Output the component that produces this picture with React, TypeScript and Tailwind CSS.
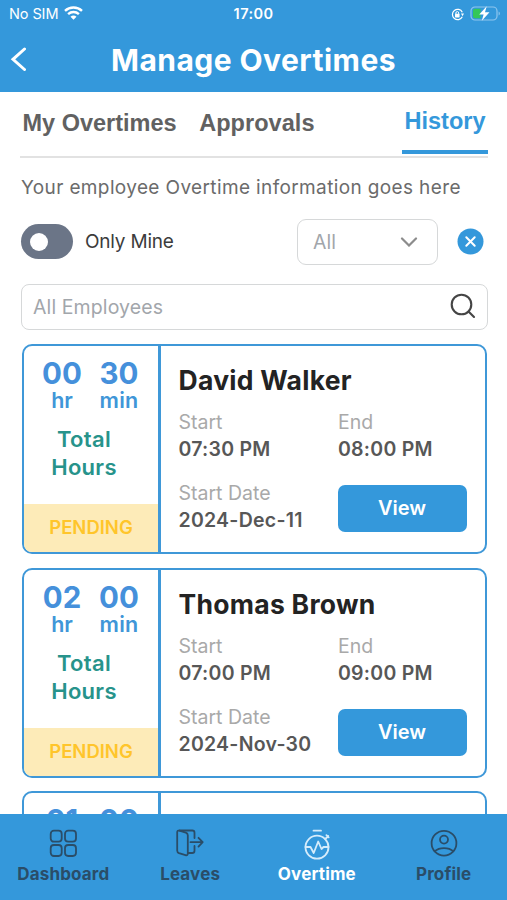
import React, { useState } from 'react';
import clsx from 'clsx';

type Tab = 'my' | 'approvals' | 'history';

interface OvertimeEntry {
  hours: string;
  minutes: string;
  name: string;
  start: string;
  end: string;
  startDate: string;
}

const entries: OvertimeEntry[] = [
  { hours: '00', minutes: '30', name: 'David Walker', start: '07:30 PM', end: '08:00 PM', startDate: '2024-Dec-11' },
  { hours: '02', minutes: '00', name: 'Thomas Brown', start: '07:00 PM', end: '09:00 PM', startDate: '2024-Nov-30' },
  { hours: '01', minutes: '00', name: '', start: '', end: '', startDate: '' },
];

const StatusBar: React.FC = () => (
  <div className="relative flex h-7 items-center justify-between pl-[9px] pr-[6px] text-white">
    <div className="flex items-center gap-[6px]">
      <span className="text-[14.5px] leading-7 tracking-[-0.1px]">No SIM</span>
      <svg className="-mt-[2px] h-[14px] w-[19px]" viewBox="0 0 19 14" fill="none" stroke="currentColor" strokeWidth="2.4">
        <path d="M1 4.9C5.8 .4 13.2 .4 18 4.9" />
        <path d="M4.1 8.2C7.2 5.3 11.8 5.3 14.9 8.2" />
        <path d="M9.5 13.8 6.5 10.8C8.2 9.2 10.8 9.2 12.5 10.8Z" fill="currentColor" stroke="none" />
      </svg>
    </div>
    <span className="absolute left-1/2 -translate-x-1/2 text-[14.5px] font-semibold leading-7 tracking-[0.4px]">17:00</span>
    <div className="-mt-[2px] flex items-center gap-[6px]">
      <svg className="mt-[2px] h-[13px] w-[13px]" viewBox="0 0 13 13" fill="none" stroke="currentColor" strokeWidth="1.2">
        <path d="M11.3 8.8A5.2 5.2 0 1 1 11.3 4.2" />
        <path d="M10 5.5h3l-1.5 2.7Z" fill="currentColor" stroke="none" />
        <rect x="4" y="5.8" width="4.6" height="3.6" rx=".6" fill="currentColor" stroke="none" />
        <path d="M4.9 6V5a1.4 1.4 0 0 1 2.8 0v1" strokeWidth="1" />
      </svg>
      <svg className="h-[17px] w-[31px]" viewBox="0 0 31 17">
        <rect x="1" y="2" width="26" height="13" rx="4" fill="none" stroke="#8fc6ee" strokeWidth="1.2" />
        <path d="M28.6 6.4c1.7.7 1.7 3.5 0 4.2Z" fill="#8fc6ee" />
        <path d="M5 3.8h5.5v9.4H5a2 2 0 0 1-2-2V5.8a2 2 0 0 1 2-2Z" fill="#34c759" />
        <path d="M16.7 1.2 9.2 9.5h4.4l-1.8 6.3 7.7-8.5H15Z" fill="#fff" />
      </svg>
    </div>
  </div>
);

const tabs: { id: Tab; label: string }[] = [
  { id: 'my', label: 'My Overtimes' },
  { id: 'approvals', label: 'Approvals' },
  { id: 'history', label: 'History' },
];

const Field: React.FC<{ label: string; value: string }> = ({ label, value }) => (
  <div className="whitespace-nowrap">
    <div className="text-[19.5px] leading-[27px] text-[#a9a9a9]">{label}</div>
    <div className="text-[19.5px] font-semibold leading-[27px] tracking-[0.25px] text-[#575757]">{value}</div>
  </div>
);

const OvertimeCard: React.FC<{ entry: OvertimeEntry }> = ({ entry }) => (
  <div className="flex h-[210px] shrink-0 overflow-hidden rounded-[10px] border-[2.5px] border-[#3f98d8] bg-white">
    <div className="flex w-[137px] shrink-0 flex-col border-r-[3px] border-[#3f98d8] text-center font-semibold">
      <div className="flex gap-[17px] pl-[18px] pt-[11px] text-[#4590db]">
        <div className="w-10">
          <div className="text-[29.5px] font-bold leading-8">{entry.hours}</div>
          <div className="text-[21.5px] leading-[23px] text-[#4096d8]">hr</div>
        </div>
        <div className="w-10">
          <div className="text-[29.5px] font-bold leading-8">{entry.minutes}</div>
          <div className="text-[21.5px] leading-[23px] tracking-[0.3px] text-[#4096d8]">min</div>
        </div>
      </div>
      <div className="mt-[13px] w-[120px] text-[22px] leading-7 tracking-[0.3px] text-[#27938b]">
        Total
        <br />
        Hours
      </div>
      <div className="mt-auto h-12 bg-[#fdebb8] text-[18.5px] leading-[47px] text-[#ffc52b]">PENDING</div>
    </div>
    <div className="grow pl-[17.5px] pr-[18px] pt-4">
      <div className="h-[36px] whitespace-nowrap text-[26.5px] font-bold leading-[36px] tracking-[0.28px] text-[#232323]">{entry.name}</div>
      {entry.name && (
        <div className="mt-[11px] grid grid-cols-[159.5px_1fr] gap-y-[17px]">
          <Field label="Start" value={entry.start} />
          <Field label="End" value={entry.end} />
          <Field label="Start Date" value={entry.startDate} />
          <button className="mt-[5px] h-[47px] w-[129px] rounded-[7px] bg-[#3498db] pr-px text-[20px] font-semibold leading-[47px] text-white">
            View
          </button>
        </div>
      )}
    </div>
  </div>
);

const navItems = [
  {
    label: 'Dashboard',
    icon: (
      <>
        <rect x="1.7" y="1.7" width="11" height="11" rx="3.2" />
        <rect x="16" y="1.7" width="11" height="11" rx="3.2" />
        <rect x="1.7" y="16" width="11" height="11" rx="3.2" />
        <rect x="16" y="16" width="11" height="11" rx="3.2" />
      </>
    ),
  },
  {
    label: 'Leaves',
    icon: (
      <>
        <path d="M3.5 1.5h12.8c1.7 0 2.2.8 2.2 2.3V9M18.5 17v4.7c0 1.5-.6 2.3-2.3 2.3H12" />
        <path d="M1.2 3.3c0-1.500.8-2 2.200-1.600L9.800 3.600c1.500.5 2 1.200 2 2.700v18c0 1.700-.8 2.300-2.300 1.800L3 24.200c-1.300-.5-1.800-1.200-1.800-2.700Z" />
        <path d="M14.5 13.2h12M22.5 8.800l4.200 4.400-4.200 4.400" />
      </>
    ),
  },
  {
    label: 'Overtime',
    icon: (
      <>
        <circle cx="14" cy="18.2" r="11.5" />
        <path d="M10.5 1.7H18M22.3 10l2.900-3M23.400 6.200l2.300 2.200" />
        <path d="M2.5 18h5l3.200 6 4.500-11.500L18.500 20l2-2h5" />
      </>
    ),
  },
  {
    label: 'Profile',
    icon: (
      <>
        <circle cx="14" cy="14.2" r="12.4" />
        <circle cx="14" cy="10.6" r="4" />
        <path d="M4.8 22.2c4.500-4.200 14-4.200 18.400 0" />
      </>
    ),
  },
];

const App: React.FC = () => {
  const [activeTab, setActiveTab] = useState<Tab>('history');

  return (
    <div className="flex h-[900px] w-[507px] flex-col overflow-hidden bg-white font-['Inter',sans-serif]">
      <header className="h-[92px] shrink-0 bg-[#3498db]">
        <StatusBar />
        <div className="relative flex h-16 items-center pl-[9px] text-white">
          <svg className="-mt-[2px] h-6 w-[17px]" viewBox="0 0 17 24" fill="none" stroke="currentColor" strokeWidth="3" strokeLinecap="round">
            <path d="M15.5 2 4 12.3l11.500 10.200" />
          </svg>
          <h1 className="absolute left-[111px] whitespace-nowrap text-[30px] font-bold leading-10 tracking-[0.45px]">Manage Overtimes</h1>
        </div>
      </header>

      <main className="flex min-h-0 flex-1 flex-col overflow-hidden pl-[21px] pr-[20px]">
        <div className="-ml-px -mr-px flex h-[66px] shrink-0 items-start border-b-2 border-[#e2e2e2] font-['Liberation_Sans',sans-serif] text-[23.5px] font-bold leading-7">
          {tabs.map((tab) => (
            <button
              key={tab.id}
              onClick={() => setActiveTab(tab.id)}
              className={clsx(
                'whitespace-nowrap',
                tab.id === 'my' && 'ml-[2.5px]',
                tab.id === 'approvals' && 'ml-[22.5px] tracking-[0.05px]',
                tab.id === 'history' && 'ml-auto w-[86px]',
                activeTab === tab.id ? 'h-[62px] border-b-[4px] border-[#3498db] text-[#3498db]' : 'mt-[17px] text-[#616161]'
              )}
            >
              {tab.label}
            </button>
          ))}
        </div>

        <p className="mt-[15px] shrink-0 whitespace-nowrap text-[19px] leading-[30px] tracking-[0.37px] text-[#6b6b6b]">
          Your employee Overtime information goes here
        </p>

        <div className="mt-[15px] flex h-[47px] shrink-0 items-center">
          <div className="flex h-[35px] w-[52px] items-center rounded-full bg-[#6b7587] pl-[9px]">
            <div className="h-[18px] w-[18px] rounded-full bg-white" />
          </div>
          <span className="ml-3 mt-[2px] text-[19px] tracking-[-0.2px] text-[#3c3c3c]">Only Mine</span>
          <div className="ml-auto flex h-[46px] w-[141px] items-center justify-between rounded-[9px] border-[1.5px] border-[#d6d8d9] pl-[15px] pr-[19px]">
            <span className="mt-[2px] text-[19.5px] text-[#a2a6ab]">All</span>
            <svg className="h-[10px] w-[18px]" viewBox="0 0 18 10" fill="none" stroke="#8c8c8c" strokeWidth="2.2" strokeLinecap="round">
              <path d="M2 1.5 9 8.5l7-7" />
            </svg>
          </div>
          <svg className="ml-[19px] mr-[3px] h-[27px] w-[27px]" viewBox="0 0 27 27">
            <circle cx="13.5" cy="13.5" r="13" fill="#3498db" />
            <path d="m9.3 9.3 8.400 8.400m0-8.400-8.400 8.400" stroke="#fff" strokeWidth="2" strokeLinecap="round" />
          </svg>
        </div>

        <div className="mt-[19px] flex h-[46px] w-[467px] shrink-0 items-center justify-between rounded-[8px] border-[1.5px] border-[#d6d8d9] px-[11px]">
          <span className="mt-[2px] text-[19.5px] tracking-[0.1px] text-[#a2a6ab]">All Employees</span>
          <svg className="-mt-[2px] h-[26px] w-[26px]" viewBox="0 0 26 26" fill="none" stroke="#454545" strokeWidth="2.1" strokeLinecap="round">
            <circle cx="11.5" cy="11.5" r="9.8" />
            <path d="m18.5 18.5 5.5 5.5" />
          </svg>
        </div>

        <div className="mt-[14px] flex flex-col gap-[13.5px] pl-[1px]">
          {entries.map((entry, i) => (
            <OvertimeCard key={i} entry={entry} />
          ))}
        </div>
      </main>

      <nav className="grid h-[86px] shrink-0 grid-cols-4 bg-[#3498db] pt-[15px]">
        {navItems.map((item) => (
          <div
            key={item.label}
            className={clsx('flex flex-col items-center', item.label === 'Overtime' ? 'text-white' : 'text-[#2a4d68]')}
          >
            <svg
              className={clsx('h-[30px] w-[28px] overflow-visible', item.label === 'Overtime' && 'text-[#d5ecfb]')}
              viewBox="0 0 28 30"
              fill="none"
              stroke="currentColor"
              strokeWidth="1.8"
              strokeLinecap="round"
              strokeLinejoin="round"
            >
              {item.icon}
            </svg>
            <span className="mt-[3px] text-[17px] font-bold leading-6 tracking-[0.15px]">{item.label}</span>
          </div>
        ))}
      </nav>
    </div>
  );
};

export default App;
